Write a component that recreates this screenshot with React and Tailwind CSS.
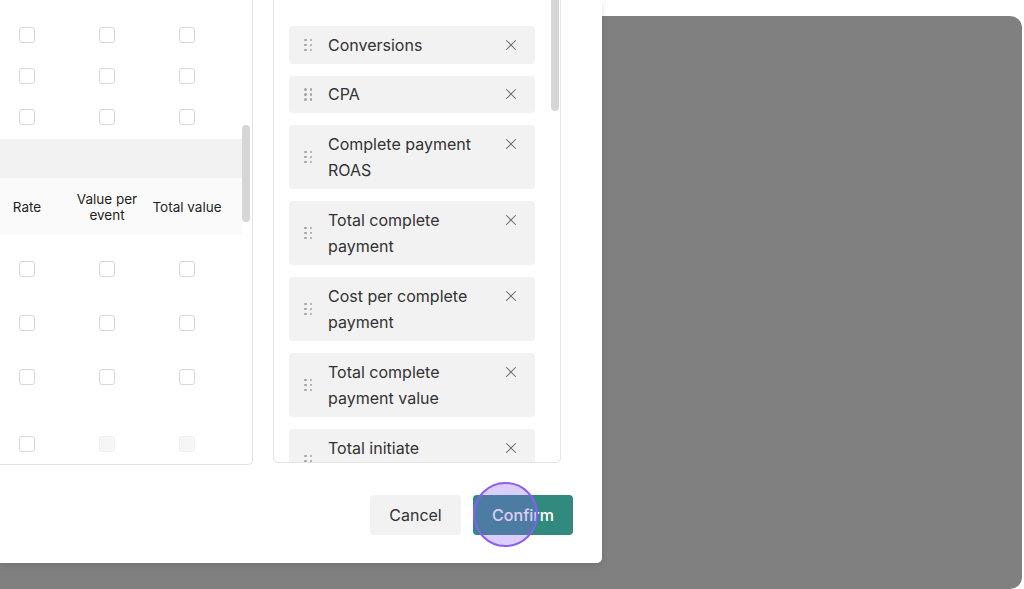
import React from 'react';
import { X } from 'lucide-react';

const metrics = [
  'Conversions',
  'CPA',
  'Complete payment ROAS',
  'Total complete payment',
  'Cost per complete payment',
  'Total complete payment value',
  'Total initiate checkout',
];

const Checkbox = ({ disabled }) => (
  <span
    className={
      disabled
        ? 'block w-4 h-4 rounded-[3px] bg-[#f6f6f6] border border-[#f1f1f1]'
        : 'block w-4 h-4 rounded-[3px] bg-white border border-[#d8d8d8]'
    }
  />
);

const CheckRow = ({ className, disabledTail }) => (
  <div className={`shrink-0 grid grid-cols-[80px_80px_80px] items-center ${className}`}>
    <div className="flex justify-center">
      <Checkbox />
    </div>
    <div className="flex justify-center">
      <Checkbox disabled={disabledTail} />
    </div>
    <div className="flex justify-center">
      <Checkbox disabled={disabledTail} />
    </div>
  </div>
);

const DragDots = () => (
  <span className="grid grid-cols-2 gap-x-[3px] gap-y-[2.5px] w-[8px] shrink-0">
    {[0, 1, 2, 3, 4, 5].map(i => (
      <span key={i} className="block w-[2.5px] h-[2.5px] rounded-full bg-[#a3a3a3]" />
    ))}
  </span>
);

export default function App() {
  return (
    <div className="relative w-[1024px] h-[589px] overflow-hidden bg-white font-['Inter','Liberation_Sans',sans-serif]">
      {/* dimmed page behind the dialog */}
      <div className="absolute top-[16px] left-0 right-[2px] bottom-0 bg-[#808080] rounded-r-[12px]" />

      {/* dialog */}
      <div className="absolute left-0 top-0 w-[602px] h-[563px] bg-white rounded-br-[5px] shadow-[0_2px_6px_rgba(0,0,0,0.12)] flex flex-col">
        <div className="flex items-start gap-[20px] ml-[-13px] mt-[-30px]">
          {/* left: metric table */}
          <div className="relative shrink-0 w-[266px] h-[495px] overflow-hidden border-r border-b border-[#e3e3e3] rounded-br-[5px] flex flex-col pt-[44px]">
            <CheckRow className="h-[41px]" />
            <CheckRow className="h-[41px]" />
            <CheckRow className="h-[41px]" />
            <div className="shrink-0 mt-[2px] h-[39px] mr-[10px] bg-[#f2f2f2]" />
            <div className="shrink-0 h-[57px] mr-[10px] bg-[#fafafa] grid grid-cols-[80px_80px_80px] items-center text-[13.5px] leading-[16px] text-[#1f1f1f] text-center">
              <span>Rate</span>
              <span className="px-[6px]">Value per event</span>
              <span>Total value</span>
            </div>
            <div className="shrink-0 pt-[7px] flex flex-col">
              <CheckRow className="h-[54px]" />
              <CheckRow className="h-[54px]" />
              <CheckRow className="h-[54px]" />
              <CheckRow className="h-[80px]" disabledTail />
            </div>
            <span className="absolute right-[2px] top-[155px] w-[8px] h-[97px] rounded-full bg-[#d6d6d6]" />
          </div>

          {/* right: selected metrics */}
          <div className="relative shrink-0 w-[288px] h-[493px] overflow-hidden border border-[#e3e3e3] rounded-b-[5px] pl-[15px] pt-[55px]">
            <div className="flex flex-col gap-[12px] w-[246px]">
              {metrics.map(m => (
                <div key={m} className="shrink-0 flex items-start bg-[#f2f2f2] rounded-[4px] py-[5.5px]">
                  <span className="self-center ml-[15px]">
                    <DragDots />
                  </span>
                  <span className="ml-[16px] w-[158px] text-[16px] leading-[26.5px] text-[#333]">{m}</span>
                  <X className="ml-auto mr-[15px] mt-[4px] w-[18px] h-[18px] text-[#6b6b6b]" strokeWidth={1.4} />
                </div>
              ))}
            </div>
            <span className="absolute right-[1px] top-0 w-[8px] h-[140px] rounded-full bg-[#d6d6d6]" />
          </div>
        </div>

        {/* footer */}
        <div className="flex justify-end gap-[12px] pr-[29px] mt-[30px]">
          <button className="w-[91px] h-[40px] rounded-[4px] bg-[#f2f2f2] text-[16px] text-[#333]">Cancel</button>
          <button className="w-[100px] h-[40px] rounded-[4px] bg-[#318a7d] text-[16px] font-medium text-white">Confirm</button>
        </div>
      </div>

      {/* click indicator */}
      <span className="absolute left-[473px] top-[482px] w-[65px] h-[65px] rounded-full bg-[rgba(139,92,246,0.3)] border-2 border-[#8b5cf6]" />
    </div>
  );
}
